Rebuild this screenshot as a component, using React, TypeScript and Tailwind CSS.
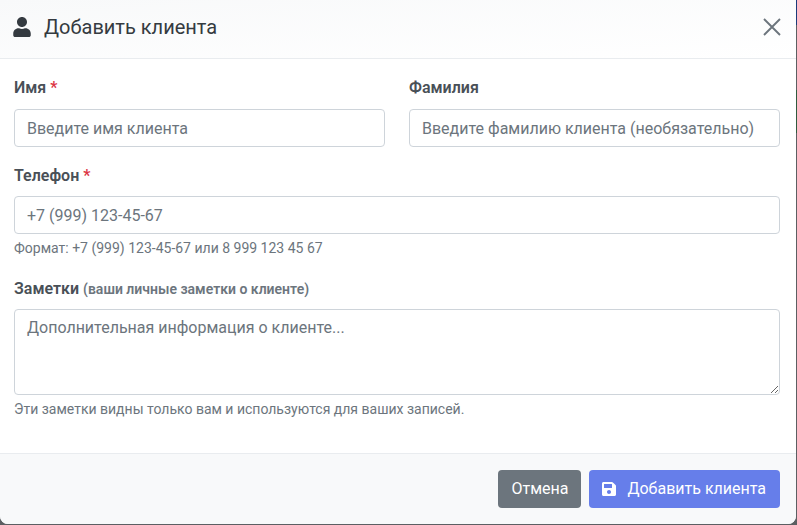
import React from 'react';
import { FaUser, FaSave } from 'react-icons/fa';

const inputClass =
  'w-full h-[38px] rounded border border-[#ced4da] bg-white px-3 text-base text-[#212529] placeholder:text-[#6c757d] outline-none';

const labelClass = 'block text-base leading-6 font-semibold text-[#495057]';

const App: React.FC = () => {
  return (
    <div className="flex h-[525px] w-[797px] items-start overflow-hidden bg-[#5c5f62] font-['Roboto',sans-serif] text-[#212529]">
      <div className="flex h-[524px] w-[796px] flex-col rounded-b-lg bg-white">
        {/* Header */}
        <div className="flex h-[59px] items-center justify-between border-b border-[#e9ecef] bg-gradient-to-br from-[#f8f9fa] to-white pr-[15px] pb-1 pl-3">
          <div className="flex items-center gap-3">
            <FaUser size={20} className="text-[#343a40]" />
            <h5 className="text-xl leading-6 text-[#343a40]">Добавить клиента</h5>
          </div>
          <button className="text-[#6c757d]" aria-label="Закрыть">
            <svg width="18" height="18" viewBox="0 0 18 18" fill="none" stroke="currentColor" strokeWidth="1.9">
              <path d="M1 1l16 16M17 1L1 17" />
            </svg>
          </button>
        </div>

        {/* Form */}
        <div className="flex-1 pt-[17px] pr-4 pl-[14px]">
          <div className="grid grid-cols-2 gap-x-6">
            <div>
              <label className={`${labelClass} mb-[9px]`}>
                Имя <span className="text-[#dc3545]">*</span>
              </label>
              <input className={inputClass} placeholder="Введите имя клиента" />
            </div>
            <div>
              <label className={`${labelClass} mb-[9px]`}>Фамилия</label>
              <input className={inputClass} placeholder="Введите фамилию клиента (необязательно)" />
            </div>
          </div>

          <div className="mt-[17px]">
            <label className={`${labelClass} mb-2`}>
              Телефон <span className="text-[#dc3545]">*</span>
            </label>
            <input className={inputClass} placeholder="+7 (999) 123-45-67" />
            <div className="mt-1 text-sm leading-[21px] text-[#6c757d]">Формат: +7 (999) 123-45-67 или 8 999 123 45 67</div>
          </div>

          <div className="mt-[18px]">
            <label className={`${labelClass} mb-2`}>
              Заметки <span className="text-sm text-[#6c757d]">(ваши личные заметки о клиенте)</span>
            </label>
            <textarea
              className="block h-[86px] w-full rounded border border-[#ced4da] bg-white px-3 py-1.5 text-base text-[#212529] outline-none placeholder:text-[#6c757d]"
              placeholder="Дополнительная информация о клиенте..."
            />
            <div className="mt-1 text-sm leading-[21px] text-[#6c757d]">Эти заметки видны только вам и используются для ваших записей.</div>
          </div>
        </div>

        {/* Footer */}
        <div className="flex h-[71px] items-center justify-end gap-2 rounded-b-lg border-t border-[#e9ecef] bg-[#f8f9fa] pr-4 pl-[14px]">
          <button className="h-[38px] rounded bg-[#6c757d] px-[13px] text-base text-white">Отмена</button>
          <button className="flex h-[38px] items-center gap-2.5 rounded bg-[#667eea] pr-[14px] pl-3 text-base text-white">
            <FaSave size={16} />
            Добавить клиента
          </button>
        </div>
      </div>

      {/* Backdrop sliver visible at the right edge */}
      <div className="flex w-px flex-col">
        <div className="h-[25px] bg-[#1b3a7a]" />
        <div className="h-[65px]" />
        <div className="h-[43px] bg-[#2f5a3e]" />
      </div>
    </div>
  );
};

export default App;
